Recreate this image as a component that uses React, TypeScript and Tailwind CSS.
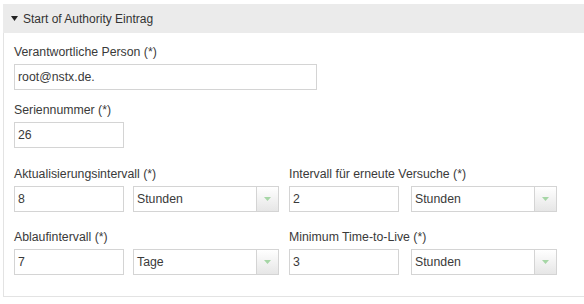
import React from 'react';

const font = { fontFamily: '"Liberation Sans", Arial, sans-serif' };

const TextInput: React.FC<{ value: string; width: string }> = ({ value, width }) => (
  <div className={`${width} h-[26px] border border-[#d4d4d4] bg-white flex items-center px-[3px] text-[12.3px] text-[#3a3a3a]`}>
    {value}
  </div>
);

const Select: React.FC<{ value: string }> = ({ value }) => (
  <div className="w-[146px] h-[26px] border border-[#d4d4d4] bg-white flex items-stretch text-[12.3px] text-[#3a3a3a]">
    <div className="flex-1 flex items-center px-[3px]">{value}</div>
    <div className="w-[22px] border-l border-[#d4d4d4] bg-gradient-to-b from-white to-[#e6e6e6] flex items-center justify-center">
      <svg width="7" height="4" viewBox="0 0 7 4">
        <path d="M0 0 L7 0 L3.5 4 Z" fill="#a6d6a6" />
      </svg>
    </div>
  </div>
);

const Label: React.FC<{ children: React.ReactNode }> = ({ children }) => (
  <div className="h-4 leading-4 text-[12.3px] text-[#3a3a3a] mb-1">{children}</div>
);

const IntervalField: React.FC<{ label: string; value: string; unit: string; gap: string }> = ({ label, value, unit, gap }) => (
  <div>
    <Label>{label}</Label>
    <div className={`flex ${gap}`}>
      <TextInput value={value} width="w-[110px]" />
      <Select value={unit} />
    </div>
  </div>
);

export default function App() {
  return (
    <div className="w-[584px] h-[304px] bg-white overflow-hidden" style={font}>
      <div className="ml-[3px] mt-[4px] w-[590px] border border-[#e3e3e3] border-t-0">
        <div className="h-[29px] bg-[#ebebeb] flex items-center pl-[8px] text-[12px] text-[#333] -ml-px">
          <svg width="7" height="5" viewBox="0 0 7 5" className="mr-[5px]">
            <path d="M0 0 L7 0 L3.5 5 Z" fill="#222" />
          </svg>
          Start of Authority Eintrag
        </div>
        <div className="pl-[10px] pt-[11px] pb-[21px]">
          <div>
            <Label>Verantwortliche Person (*)</Label>
            <TextInput value="root@nstx.de." width="w-[303px]" />
          </div>
          <div className="mt-3">
            <Label>Seriennummer (*)</Label>
            <TextInput value="26" width="w-[110px]" />
          </div>
          <div className="mt-[18px] flex">
            <div className="w-[275px]">
              <IntervalField label="Aktualisierungsintervall (*)" value="8" unit="Stunden" gap="gap-[9px]" />
            </div>
            <IntervalField label="Intervall für erneute Versuche (*)" value="2" unit="Stunden" gap="gap-3" />
          </div>
          <div className="mt-[17px] flex">
            <div className="w-[275px]">
              <IntervalField label="Ablaufintervall (*)" value="7" unit="Tage" gap="gap-[9px]" />
            </div>
            <IntervalField label="Minimum Time-to-Live (*)" value="3" unit="Stunden" gap="gap-3" />
          </div>
        </div>
      </div>
    </div>
  );
}
